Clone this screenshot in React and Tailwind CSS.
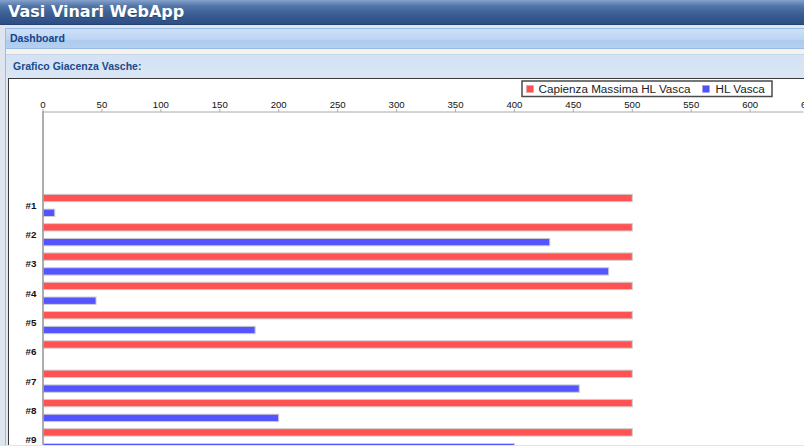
import React from "react";

const SX = 1.1786;
const X0 = 43.5;
const xs = (v) => X0 + v * SX;
const blue = [10, 430, 480, 45, 180, 0, 455, 200, 400];
const ticks = [0, 50, 100, 150, 200, 250, 300, 350, 400, 450, 500, 550, 600, 650];

function Chart() {
  return (
    <svg
      width="795"
      height="366"
      viewBox="9.5 80.5 795 366"
      className="block"
      style={{ fontFamily: "'Liberation Sans', Arial, sans-serif" }}
    >
      <rect x="9.5" y="80.5" width="795" height="366" fill="#ffffff" />
      {/* legend */}
      <rect x="522.5" y="82.5" width="250" height="15.5" fill="#fff" stroke="#4a4a4a" strokeWidth="1.5" />
      <rect x="527" y="87" width="7" height="7" fill="#ff5050" stroke="#d9a0a0" strokeWidth="0.5" />
      <text x="539" y="94.5" fontSize="11.7" fill="#222">Capienza Massima HL Vasca</text>
      <rect x="703" y="87" width="7" height="7" fill="#5050ff" stroke="#a0a0d9" strokeWidth="0.5" />
      <text x="716" y="94.5" fontSize="11.7" fill="#222">HL Vasca</text>
      {/* ticks */}
      {ticks.map((t) => (
        <g key={t}>
          <text x={xs(t)} y="109" fontSize="9.6" textAnchor="middle" fill="#111">
            {t}
          </text>
          <line x1={xs(t)} x2={xs(t)} y1="110.5" y2="113.5" stroke="#b0b0b0" strokeWidth="1" />
        </g>
      ))}
      <line x1="43" x2="804" y1="113.5" y2="113.5" stroke="#a8a8a8" strokeWidth="1" />
      {/* bars */}
      {blue.map((b, i) => {
        const top = 195.8 + i * 29.3;
        return (
          <g key={i}>
            <rect x={X0} y={top} width={500 * SX} height="7.4" fill="#ff5353" stroke="#cfcfcf" strokeWidth="1" />
            {b > 0 && (
              <rect x={X0} y={top + 14.8} width={b * SX} height="7.4" fill="#5555ff" stroke="#cfcfcf" strokeWidth="1" />
            )}
            <text x="37" y={top + 14.4} fontSize="9.8" textAnchor="end" fill="#111" fontWeight="600">
              #{i + 1}
            </text>
          </g>
        );
      })}
      <line x1="43.5" x2="43.5" y1="113" y2="446" stroke="#9a9a9a" strokeWidth="1.6" />
    </svg>
  );
}

export default function App() {
  return (
    <div className="w-[804px] h-[446px] overflow-hidden bg-[#dfe5ee] font-['Liberation_Sans',Arial,sans-serif]">
      <header className="h-[25px] flex items-center pl-[8px] bg-[linear-gradient(to_bottom,#86a2cc_0%,#5276aa_25%,#3c5f94_55%,#2c4e84_100%)] border-b border-[#24436f]">
        <span className="text-white font-bold text-[16px] leading-none font-['DejaVu_Sans',sans-serif] [text-shadow:0_1px_0_rgba(0,0,0,0.25)]">
          Vasi Vinari WebApp
        </span>
      </header>
      <div className="pt-[3px] pl-[5px]">
        <div className="border-l border-t border-[#99bbe8] bg-[#dfe8f6]">
          <div className="h-[20px] flex items-center pl-[4px] bg-[linear-gradient(to_bottom,#cde0f7_0%,#bcd5f3_55%,#aecbef_56%,#b3cff0_100%)] border-b border-[#99bbe8]">
            <span className="text-[10.5px] font-bold text-[#15428b] leading-none">Dashboard</span>
          </div>
          <div className="h-[6px] bg-[#f4f2ea] border-b border-[#c6d6ea]" />
          <div className="h-[23px] flex items-center pl-[7px] bg-[linear-gradient(to_bottom,#d3e2f4_0%,#dae6f5_100%)]">
            <span className="text-[10.5px] font-bold text-[#1c4a8a] leading-none">Grafico Giacenza Vasche:</span>
          </div>
          <div className="pl-[2px]">
            <div className="border-l-[1.5px] border-t-[1.5px] border-[#3a3a3a] bg-white">
              <Chart />
            </div>
          </div>
        </div>
      </div>
    </div>
  );
}
